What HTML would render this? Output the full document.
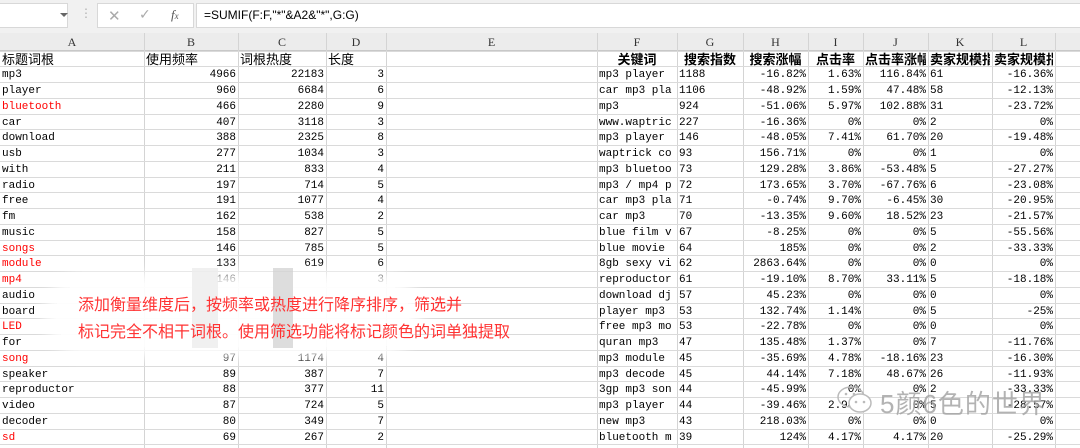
<!DOCTYPE html>
<html><head><meta charset="utf-8"><style>
body{margin:0;width:1080px;height:448px;overflow:hidden;background:#fff;position:relative;font-family:"Liberation Mono","Noto Sans CJK SC",monospace;font-size:11px;color:#000}
.a{position:absolute}
.top{left:0;top:0;width:1080px;height:33px;background:#f1f1f1}
.box{background:#fff;border:1px solid #d8d8d8;height:23px;top:3px}
.colh{left:0;top:33px;width:1080px;height:17px;background:#ececec;border-bottom:1px solid #c8c8c8}
.ch{position:absolute;top:33px;height:17px;line-height:18px;text-align:center;font-family:"Liberation Serif",serif;font-size:12px;color:#333}
.vl{position:absolute;top:33px;width:1px;height:415px;background:#d4d4d4}
.hl{position:absolute;left:0;width:1080px;height:1px;background:#dadada}
.c{position:absolute;height:15px;line-height:16px;white-space:nowrap;overflow:hidden}
.r{text-align:right}
.red{color:#f00}
.hd{font-family:"Liberation Sans","Noto Sans CJK SC",sans-serif;font-size:13px}
.hb{font-family:"Liberation Sans","Noto Sans CJK SC",sans-serif;font-size:13px;font-weight:bold;text-align:center}
</style></head><body>
<div class="a top"></div>
<div class="a box" style="left:-2px;width:68px"></div>
<div class="a" style="left:60px;top:13px;width:0;height:0;border-left:4px solid transparent;border-right:4px solid transparent;border-top:4px solid #666"></div>
<div class="a" style="left:83px;top:9px;color:#aaa;font-size:10px;line-height:4px">·<br>·<br>·</div>
<div class="a box" style="left:97px;width:95px"></div>
<div class="a" style="left:108px;top:7px;color:#aaa;font-family:'Liberation Sans';font-size:15px">✕</div>
<div class="a" style="left:139px;top:7px;color:#aaa;font-family:'DejaVu Sans';font-size:14px">✓</div>
<div class="a" style="left:171px;top:7px;color:#555;font-family:'Liberation Serif';font-style:italic;font-size:13px">f<span style="font-size:9px">x</span></div>
<div class="a box" style="left:196px;width:890px"></div>
<div class="a" style="left:204px;top:8px;font-family:'Liberation Sans';font-size:12px">=SUMIF(F:F,"*"&amp;A2&amp;"*",G:G)</div>
<div class="a colh"></div>
<div id="g"></div>
<div class="a" style="left:55px;top:283px;width:355px;height:64px;background:rgba(255,255,255,.93);border-radius:30px;box-shadow:0 0 14px 10px rgba(255,255,255,.93)"></div>
<div class="a" style="left:192px;top:268px;width:26px;height:80px;background:#ececec;opacity:.8"></div>
<div class="a" style="left:273px;top:268px;width:20px;height:80px;background:#cfcfcf;opacity:.7"></div>
<div class="a" style="left:78px;top:292px;color:#f33;font-family:'Liberation Sans','Noto Sans CJK SC',sans-serif;font-size:16px;line-height:27px">添加衡量维度后，按频率或热度进行降序排序，筛选并<br>标记完全不相干词根。使用筛选功能将标记颜色的词单独提取</div>
<svg class="a" style="left:836px;top:384px" width="38" height="32" viewBox="0 0 38 32"><ellipse cx="15" cy="13" rx="13" ry="10" fill="none" stroke="#bbb" stroke-width="1.5"/><ellipse cx="24" cy="19" rx="11" ry="9" fill="#fff" stroke="#bbb" stroke-width="1.5"/><circle cx="20" cy="18" r="1.3" fill="#bbb"/><circle cx="28" cy="18" r="1.3" fill="#bbb"/><circle cx="10" cy="10" r="1.3" fill="#bbb"/><circle cx="18" cy="10" r="1.3" fill="#bbb"/></svg>
<div class="a" style="left:880px;top:384px;color:rgba(160,160,160,.8);font-family:'Liberation Sans','Noto Sans CJK SC',sans-serif;font-size:26px;letter-spacing:1px">5颜6色的世界</div>
<script>
var cols=[0,144,238,326,386,597,677,743,808,863,928,992,1055];
var L="ABCDEFGHIJKL";
var h='';
for(var i=0;i<12;i++){h+='<div class="ch" style="left:'+cols[i]+'px;width:'+(cols[i+1]-cols[i])+'px">'+L[i]+'</div>';}
for(var i=1;i<13;i++)h+='<div class="vl" style="left:'+cols[i]+'px"></div>';
var T=51.5,P=15.75;
for(var i=0;i<26;i++)h+='<div class="hl" style="top:'+Math.round(T+i*P-1)+'px"></div>';
function cell(ci,row,txt,cls){var x=cols[ci],w=cols[ci+1]-cols[ci]-4;h+='<div class="c '+(cls||'')+'" style="left:'+(x+2)+'px;width:'+w+'px;top:'+(T+row*P)+'px">'+txt+'</div>';}
cell(0,0,'标题词根','hd');cell(1,0,'使用频率','hd');cell(2,0,'词根热度','hd');cell(3,0,'长度','hd');
var hs=['关键词','搜索指数','搜索涨幅','点击率','点击率涨幅','卖家规模指数','卖家规模指数涨幅'];
for(var i=0;i<7;i++)cell(5+i,0,hs[i],'hb');
var A=[['mp3',4966,22183,3],['player',960,6684,6],['*bluetooth',466,2280,9],['car',407,3118,3],['download',388,2325,8],['usb',277,1034,3],['with',211,833,4],['radio',197,714,5],['free',191,1077,4],['fm',162,538,2],['music',158,827,5],['*songs',146,785,5],['*module',133,619,6],['*mp4',146,'',3],['audio','','',''],['board','','',''],['*LED','','',''],['for','','',''],['*song',97,1174,4],['speaker',89,387,7],['reproductor',88,377,11],['video',87,724,5],['decoder',80,349,7],['*sd',69,267,2]];
A.forEach(function(r,i){var n=r[0],red=n[0]=='*';if(red)n=n.slice(1);cell(0,i+1,n,red?'red':'');cell(1,i+1,r[1],'r');cell(2,i+1,r[2],'r');cell(3,i+1,r[3],'r');});
var F=`mp3 player|1188|-16.82%|1.63%|116.84%|61|-16.36%
car mp3 pla|1106|-48.92%|1.59%|47.48%|58|-12.13%
mp3|924|-51.06%|5.97%|102.88%|31|-23.72%
www.waptric|227|-16.36%|0%|0%|2|0%
mp3 player|146|-48.05%|7.41%|61.70%|20|-19.48%
waptrick co|93|156.71%|0%|0%|1|0%
mp3 bluetoo|73|129.28%|3.86%|-53.48%|5|-27.27%
mp3 / mp4 p|72|173.65%|3.70%|-67.76%|6|-23.08%
car mp3 pla|71|-0.74%|9.70%|-6.45%|30|-20.95%
car mp3|70|-13.35%|9.60%|18.52%|23|-21.57%
blue film v|67|-8.25%|0%|0%|5|-55.56%
blue movie|64|185%|0%|0%|2|-33.33%
8gb sexy vi|62|2863.64%|0%|0%|0|0%
reproductor|61|-19.10%|8.70%|33.11%|5|-18.18%
download dj|57|45.23%|0%|0%|0|0%
player mp3|53|132.74%|1.14%|0%|5|-25%
free mp3 mo|53|-22.78%|0%|0%|0|0%
quran mp3|47|135.48%|1.37%|0%|7|-11.76%
mp3 module|45|-35.69%|4.78%|-18.16%|23|-16.30%
mp3 decode|45|44.14%|7.18%|48.67%|26|-11.93%
3gp mp3 son|44|-45.99%|0%|0%|2|-33.33%
mp3 player|44|-39.46%|2.94%|0%|5|-28.57%
new mp3|43|218.03%|0%|0%|0|0%
bluetooth m|39|124%|4.17%|4.17%|20|-25.29%`.split('\n');
F.forEach(function(l,i){var r=l.split('|');cell(5,i+1,r[0]);cell(6,i+1,r[1]);cell(7,i+1,r[2],'r');cell(8,i+1,r[3],'r');cell(9,i+1,r[4],'r');cell(10,i+1,r[5]);cell(11,i+1,r[6],'r');});
document.getElementById('g').innerHTML=h;
</script>
</body></html>
